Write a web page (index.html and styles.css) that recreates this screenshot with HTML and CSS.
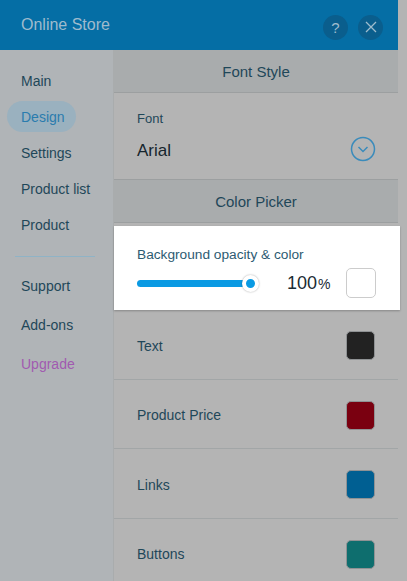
FILE: index.html
```html
<!DOCTYPE html>
<html>
<head>
<meta charset="utf-8">
<link rel="stylesheet" href="styles.css">
</head>
<body>
<div class="panel">
  <header class="topbar">
    <div class="title">Online Store</div>
    <div class="tools">
      <span class="tool">?</span>
      <span class="tool">
        <svg width="12" height="12" viewBox="0 0 12 12"><path d="M1 1L11 11M11 1L1 11" stroke="#9fbccd" stroke-width="1.3" fill="none"/></svg>
      </span>
    </div>
  </header>
  <div class="body">
    <nav class="sidebar">
      <div class="nav-group">
        <div class="nav-item">Main</div>
        <div class="nav-item active">Design</div>
        <div class="nav-item">Settings</div>
        <div class="nav-item">Product list</div>
        <div class="nav-item">Product</div>
      </div>
      <div class="nav-sep"></div>
      <div class="nav-group2">
        <div class="nav-item2">Support</div>
        <div class="nav-item2">Add-ons</div>
        <div class="nav-item2 upgrade">Upgrade</div>
      </div>
    </nav>
    <main class="main">
      <div class="band first">Font Style</div>
      <div class="font-sec">
        <div class="font-label">Font</div>
        <div class="font-row">
          <span class="font-value">Arial</span>
          <svg class="chev" width="26" height="26" viewBox="0 0 26 26"><circle cx="13" cy="13" r="11.5" stroke="#3a8bbb" stroke-width="1.5" fill="none"/><path d="M8.5 11L13 15.5L17.5 11" stroke="#3a8bbb" stroke-width="1.5" fill="none"/></svg>
        </div>
      </div>
      <div class="band">Color Picker</div>
      <div class="gap"></div>
      <div class="opacity-card">
        <div class="op-label">Background opacity &amp; color</div>
        <div class="op-row">
          <div class="slider"><div class="fill"></div><div class="knob"></div></div>
          <div class="pct">100<span class="pct-sign">%</span></div>
          <div class="swatch white"></div>
        </div>
      </div>
      <div class="row"><span>Text</span><span class="swatch dark"></span></div>
      <div class="row"><span>Product Price</span><span class="swatch red"></span></div>
      <div class="row"><span>Links</span><span class="swatch blue"></span></div>
      <div class="row"><span>Buttons</span><span class="swatch teal"></span></div>
    </main>
  </div>
</div>
</body>
</html>
```

FILE: styles.css
```css
* { box-sizing: border-box; }
html, body { margin: 0; padding: 0; }
body {
  background: #b4b4b4;
  font-family: "Liberation Sans", Arial, sans-serif;
  width: 407px;
  height: 581px;
  overflow: hidden;
}
.panel {
  width: 398px;
  height: 581px;
  display: flex;
  flex-direction: column;
}
.topbar {
  height: 50px;
  flex: none;
  background: #056ea5;
  display: flex;
  align-items: center;
  justify-content: space-between;
  padding: 0 15px 0 21px;
}
.title {
  color: #9fbbcd;
  font-size: 16px;
}
.tools { display: flex; gap: 10px; padding-top: 4px; }
.tool {
  width: 25px;
  height: 25px;
  border-radius: 50%;
  background: #0a5e8d;
  color: #9fbccd;
  font-size: 15px;
  display: flex;
  align-items: center;
  justify-content: center;
}
.body {
  flex: 1;
  display: flex;
  min-height: 0;
}
.sidebar {
  width: 113px;
  flex: none;
  background: #b0b4b7;
  padding-top: 13px;
}
.nav-group { display: flex; flex-direction: column; padding-left: 7px; }
.nav-item {
  height: 36px;
  display: flex;
  align-items: center;
  padding-left: 14px;
  font-size: 14px;
  color: #1f4759;
}
.nav-item.active {
  width: 69px;
  height: 31px;
  margin: 2px 0 3px;
  border-radius: 16px;
  background: #9ab1bf;
  color: #2a7cae;
}
.nav-sep {
  margin: 13px 18px 9px 15px;
  height: 1px;
  background: #8fb3c6;
}
.nav-group2 { display: flex; flex-direction: column; }
.nav-item2 {
  height: 39px;
  display: flex;
  align-items: center;
  padding-left: 21px;
  font-size: 14px;
  color: #1f4759;
}
.nav-item2.upgrade { color: #a15ab0; }
.main {
  flex: 1;
  background: #b4b4b4;
  border-left: 1px solid #a9acad;
  display: flex;
  flex-direction: column;
}
.band {
  height: 44px;
  flex: none;
  background: #a9acad;
  border-top: 1px solid #9c9fa0;
  border-bottom: 1px solid #9c9fa0;
  display: flex;
  align-items: center;
  justify-content: center;
  font-size: 15px;
  color: #1f4759;
  padding-top: 1px;
}
.band.first { border-top: none; height: 43px; }
.font-sec {
  height: 86px;
  flex: none;
  padding: 18px 22px 0 23px;
}
.font-label { font-size: 13px; color: #1f4759; }
.font-row {
  display: flex;
  align-items: center;
  justify-content: space-between;
  margin-top: 10px;
}
.font-value { font-size: 17px; color: #16252d; padding-top: 3px; }
.gap { height: 3px; flex: none; }
.opacity-card {
  height: 84px;
  flex: none;
  background: #ffffff;
  margin-right: -2px;
  padding: 21px 24px 0 23px;
  box-shadow: 0 1px 2px rgba(0,0,0,0.25);
  position: relative;
}
.op-label { font-size: 13.7px; color: #2d5b72; }
.op-row {
  display: flex;
  align-items: center;
  margin-top: 6px;
}
.slider {
  width: 115px;
  height: 7px;
  position: relative;
}
.fill {
  height: 7px;
  border-radius: 4px;
  background: #0a9ae3;
}
.knob {
  position: absolute;
  right: -7px;
  top: -5px;
  width: 17px;
  height: 17px;
  border-radius: 50%;
  background: #0a9ae3;
  border: 4px solid #ffffff;
  box-shadow: 0 0 2px rgba(0,0,0,0.35);
}
.pct {
  margin-left: 35px;
  font-size: 18px;
  color: #1a2b33;
}
.pct-sign { font-size: 14px; margin-left: 1px; }
.op-row .swatch { margin-left: auto; }
.swatch {
  width: 30px;
  height: 30px;
  border-radius: 5px;
  display: inline-block;
}
.swatch.white { background: #fff; border: 1px solid #cccccc; }
.row {
  height: 69.5px;
  flex: none;
  border-bottom: 1px solid #a2a6a7;
  display: flex;
  align-items: center;
  justify-content: space-between;
  padding: 3px 23px 0 23px;
  font-size: 14px;
  color: #1f4759;
}
.row .swatch { width: 29px; height: 29px; border: 1px solid #8f9294; }
.swatch.dark { background: #222222; }
.swatch.red { background: #7a0010; }
.swatch.blue { background: #005f92; }
.swatch.teal { background: #0e6e6e; }
```
